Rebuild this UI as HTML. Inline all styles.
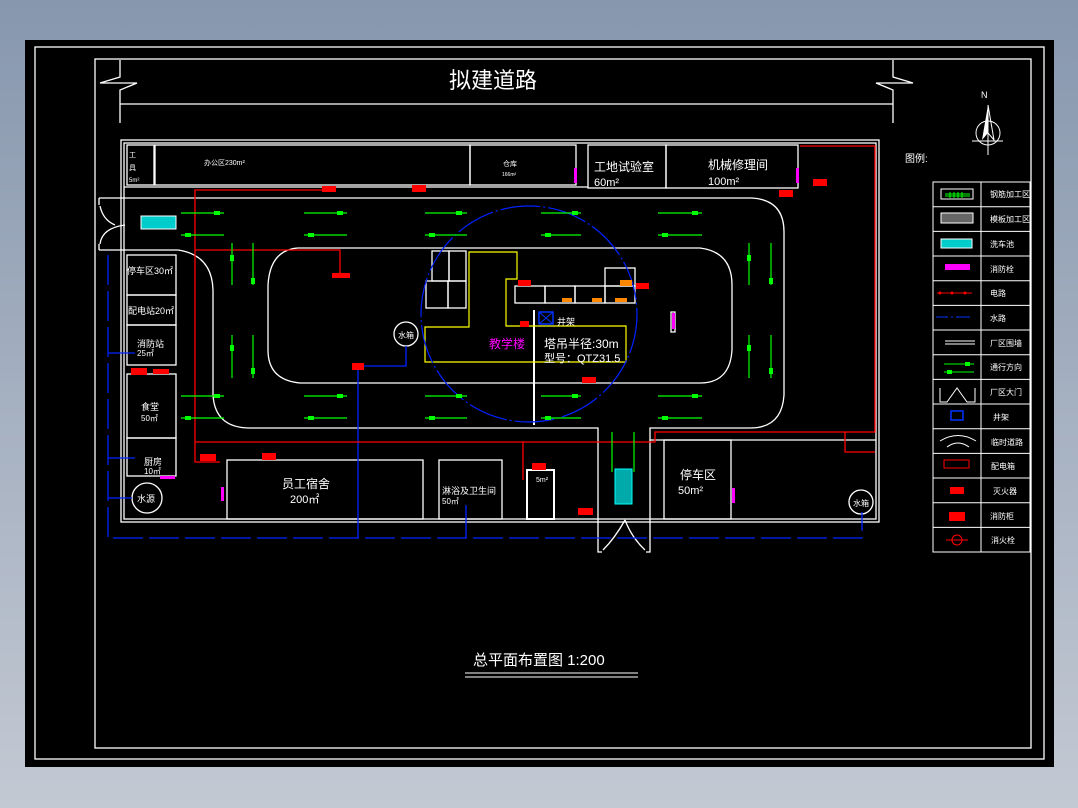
<!DOCTYPE html>
<html><head><meta charset="utf-8"><style>
html,body{margin:0;padding:0;width:1078px;height:808px;overflow:hidden;background:linear-gradient(#8797ae,#c3c9d3);}
svg{display:block}
text{font-family:"Liberation Sans","Noto Sans CJK SC",sans-serif;fill:#fff}
</style></head><body>
<svg width="1078" height="808" viewBox="0 0 1078 808" xmlns="http://www.w3.org/2000/svg">
<rect x="25" y="40" width="1029" height="727" fill="#000"/>
<g fill="none" stroke="#fff" stroke-width="1.3">
<rect x="35" y="47" width="1009" height="712"/>
<rect x="95" y="59" width="936" height="689"/>
<path d="M120 60V77L100 83H137L120 90V123"/>
<path d="M893 60V77L913 83H876L893 90V123"/>
<path d="M120 104H893"/>
<rect x="121" y="140" width="758" height="382"/>
<rect x="124" y="143" width="752" height="376"/>
<rect x="127" y="145" width="27" height="40"/>
<rect x="155" y="145" width="315" height="40"/>
<rect x="470" y="145" width="106" height="40"/>
<rect x="588" y="145" width="78" height="43"/>
<rect x="666" y="145" width="132" height="43"/>
<path d="M124 187H588"/>
<path d="M124 198H752Q784 200 784 232V395Q782 428 750 428H650V522"/>
<path d="M124 250H178Q212 255 213 290V395Q215 428 250 428H598V522"/>
<path d="M298 248H700Q732 252 732 285V350Q730 383 700 383H300Q268 380 268 350V285Q270 250 298 248Z"/>
<path d="M99 198H124M99 198V205M99 250H124M99 250V244"/>
<path d="M100 206Q103 220 115 225M100 244Q102 228 125 225"/>
<rect x="127" y="255" width="49" height="40"/>
<rect x="127" y="295" width="49" height="30"/>
<rect x="127" y="325" width="49" height="40"/>
<rect x="127" y="374" width="49" height="64"/>
<rect x="127" y="438" width="49" height="38"/>
<circle cx="147" cy="498" r="15"/>
<circle cx="406" cy="334" r="12"/>
<circle cx="861" cy="502" r="12"/>
<rect x="227" y="460" width="196" height="59"/>
<rect x="439" y="460" width="63" height="59"/>
<rect x="527" y="470" width="27" height="49" stroke-width="2"/>
<rect x="664" y="440" width="67" height="79"/>
<path d="M650 440H876"/>
<path d="M598 522V552H602M650 522V552H646"/>
<path d="M603 550Q615 538 625 520M645 550Q632 538 625 520"/>
<rect x="432" y="251" width="17" height="30"/>
<rect x="449" y="251" width="17" height="30"/>
<rect x="426" y="281" width="22" height="27"/>
<rect x="448" y="281" width="18" height="27"/>
<rect x="515" y="286" width="30" height="17"/>
<rect x="545" y="286" width="30" height="17"/>
<rect x="575" y="286" width="30" height="17"/>
<rect x="605" y="286" width="30" height="17"/>
<rect x="605" y="268" width="30" height="18"/>
<path d="M534 310V425" stroke-width="2"/>
<path d="M671 312h4v20h-4z"/>
</g>
<path d="M425 327H469V252H517V279H506V326H626V362H425Z" fill="none" stroke="#ff0" stroke-width="1.2"/>
<circle cx="529" cy="314" r="108" fill="none" stroke="#0022ff" stroke-width="1.2" stroke-dasharray="40 3 2 3"/>
<rect x="539" y="312" width="14" height="12" fill="none" stroke="#03f" stroke-width="1.5"/>
<path d="M539 312l14 12M553 312l-14 12" stroke="#03f"/>
<g stroke="#0022ff" stroke-width="1.3" fill="none">
<path d="M108 255V538H862V512" stroke-dasharray="30 6"/>
<path d="M108 353H135M108 458H135M108 498H132M406 346V366H358M358 366V538M466 505V538"/>
</g>
<g stroke="#f00" stroke-width="1.3" fill="none">
<path d="M330 190H195V462H220"/>
<path d="M195 250H340V275"/>
<path d="M195 442H655V432H875V146H800"/>
<path d="M523 442V480M845 432V452H875"/>
</g>
<g fill="#f00">
<rect x="412" y="185" width="14" height="7"/><rect x="322" y="186" width="14" height="6"/>
<rect x="332" y="273" width="18" height="5"/><rect x="131" y="368" width="16" height="7"/>
<rect x="153" y="369" width="16" height="5"/><rect x="200" y="454" width="16" height="7"/>
<rect x="262" y="453" width="14" height="7"/><rect x="532" y="463" width="14" height="7"/>
<rect x="578" y="508" width="15" height="7"/><rect x="582" y="377" width="14" height="6"/>
<rect x="779" y="190" width="14" height="7"/><rect x="813" y="179" width="14" height="7"/>
<rect x="518" y="280" width="13" height="6"/><rect x="636" y="283" width="13" height="6"/>
<rect x="520" y="321" width="9" height="6"/><rect x="352" y="363" width="12" height="7"/>
</g>
<g fill="#f0f">
<rect x="574" y="168" width="3" height="15"/><rect x="796" y="168" width="3" height="15"/>
<rect x="672" y="313" width="3" height="16"/><rect x="732" y="488" width="3" height="15"/>
<rect x="221" y="487" width="3" height="14"/><rect x="160" y="476" width="15" height="3"/>
<text x="489" y="348" font-size="12" style="fill:#f0f">教学楼</text>
</g>
<g fill="#f80"><rect x="620" y="280" width="12" height="6"/><rect x="592" y="298" width="10" height="4"/><rect x="615" y="298" width="12" height="4"/><rect x="562" y="298" width="10" height="4"/></g>
<rect x="141" y="216" width="35" height="13" fill="#0cc" stroke="#fff"/>
<rect x="615" y="469" width="17" height="35" fill="#0aa" stroke="#0ff"/>
<g stroke="#0f0" stroke-width="1.2" fill="#0f0">
<path d="M181 213H224M304 213H347M425 213H467M541 213H581M658 213H702"/>
<path d="M181 235H224M304 235H347M425 235H467M541 235H581M658 235H702"/>
<path d="M181 396H224M304 396H347M425 396H467M541 396H581M658 396H702"/>
<path d="M181 418H224M304 418H347M425 418H467M541 418H581M658 418H702"/>
<path d="M232 243V285M253 243V285M232 335V378M253 335V378M749 243V285M771 243V285M749 335V378M771 335V378M612 432V472M634 432V472"/>
</g>
<g fill="#0f0">
<rect x="214" y="211" width="6" height="4"/><rect x="337" y="211" width="6" height="4"/><rect x="456" y="211" width="6" height="4"/><rect x="572" y="211" width="6" height="4"/><rect x="692" y="211" width="6" height="4"/>
<rect x="185" y="233" width="6" height="4"/><rect x="308" y="233" width="6" height="4"/><rect x="429" y="233" width="6" height="4"/><rect x="545" y="233" width="6" height="4"/><rect x="662" y="233" width="6" height="4"/>
<rect x="337" y="394" width="6" height="4"/><rect x="456" y="394" width="6" height="4"/><rect x="572" y="394" width="6" height="4"/><rect x="692" y="394" width="6" height="4"/><rect x="214" y="394" width="6" height="4"/>
<rect x="308" y="416" width="6" height="4"/><rect x="429" y="416" width="6" height="4"/><rect x="545" y="416" width="6" height="4"/><rect x="662" y="416" width="6" height="4"/><rect x="185" y="416" width="6" height="4"/>
<rect x="230" y="255" width="4" height="6"/><rect x="251" y="278" width="4" height="6"/><rect x="230" y="345" width="4" height="6"/><rect x="251" y="368" width="4" height="6"/>
<rect x="747" y="255" width="4" height="6"/><rect x="769" y="278" width="4" height="6"/><rect x="747" y="345" width="4" height="6"/><rect x="769" y="368" width="4" height="6"/>
</g>
<text x="449" y="88" font-size="22">拟建道路</text>
<text x="204" y="165" font-size="7">办公区230m²</text>
<text x="503" y="166" font-size="7">仓库</text>
<text x="502" y="176" font-size="5">166m²</text>
<text x="129" y="157" font-size="7">工</text><text x="129" y="170" font-size="7">具</text><text x="129" y="182" font-size="6">5m²</text>
<text x="594" y="171" font-size="12">工地试验室</text>
<text x="594" y="186" font-size="11">60m²</text>
<text x="708" y="169" font-size="12">机械修理间</text>
<text x="708" y="185" font-size="11">100m²</text>
<text x="127" y="274" font-size="9">停车区30㎡</text>
<text x="128" y="314" font-size="9">配电站20㎡</text>
<text x="137" y="347" font-size="9">消防站</text><text x="137" y="356" font-size="8">25㎡</text>
<text x="141" y="410" font-size="9">食堂</text><text x="141" y="421" font-size="8">50㎡</text>
<text x="144" y="465" font-size="9">厨房</text><text x="144" y="474" font-size="8">10㎡</text>
<text x="137" y="502" font-size="9">水源</text>
<text x="398" y="338" font-size="8">水箱</text>
<text x="853" y="506" font-size="8">水箱</text>
<text x="282" y="488" font-size="12">员工宿舍</text>
<text x="290" y="503" font-size="11">200㎡</text>
<text x="442" y="494" font-size="9">淋浴及卫生间</text>
<text x="442" y="504" font-size="8">50㎡</text>
<text x="536" y="482" font-size="7">5m²</text>
<text x="680" y="479" font-size="12">停车区</text>
<text x="678" y="494" font-size="11">50m²</text>
<text x="544" y="348" font-size="12">塔吊半径:30m</text>
<text x="544" y="362" font-size="11">型号：QTZ31.5</text>
<text x="557" y="325" font-size="9">井架</text>
<text x="905" y="162" font-size="10">图例:</text>
<text x="473" y="665" font-size="15">总平面布置图 1:200</text>
<path d="M465 673H638M465 677H638" stroke="#fff"/>
<text x="981" y="98" font-size="9">N</text>
<circle cx="988" cy="133" r="12" fill="none" stroke="#fff"/>
<path d="M988 105L982 140L988 133Z" fill="#fff"/><path d="M988 105L994 140L988 133Z" fill="none" stroke="#fff"/>
<path d="M972 141H1003M988 125V155" stroke="#fff"/>
<g stroke="#fff" fill="none">
<rect x="933" y="182" width="97" height="370"/>
<path d="M981 182V552"/>
<path d="M933 206.7H1030M933 231.4H1030M933 256H1030M933 280.7H1030M933 305.4H1030M933 330H1030M933 354.7H1030M933 379.4H1030M933 404H1030M933 428.7H1030M933 453.4H1030M933 478H1030M933 502.7H1030M933 527.4H1030"/>
<rect x="941" y="189" width="32" height="10"/>
<rect x="941" y="213" width="32" height="10" fill="#666"/>
<rect x="941" y="239" width="31" height="9" fill="#0cc"/>
<path d="M945 341H975M945 344H975M940 388V402H947L957 388L967 402H975V388"/>
<path d="M940 441Q958 430 976 441M947 447Q958 439 969 447"/>
</g>
<path d="M950 192V198M954 192V198M958 192V198M962 192V198M945 194H970M945 196H970" stroke="#0f0"/>
<rect x="945" y="264" width="25" height="6" fill="#f0f"/>
<path d="M937 293H972" stroke="#f00"/><circle cx="940" cy="293" r="1.5" fill="#f00"/><circle cx="952" cy="293" r="1.5" fill="#f00"/><circle cx="965" cy="293" r="1.5" fill="#f00"/>
<path d="M936 317H948M951 317H953M956 317H970" stroke="#03f"/>
<path d="M944 364H974M944 372H974" stroke="#0f0"/><rect x="965" y="362" width="5" height="4" fill="#0f0"/><rect x="947" y="370" width="5" height="4" fill="#0f0"/>
<rect x="951" y="411" width="12" height="9" fill="none" stroke="#03f" stroke-width="1.5"/>
<rect x="944" y="460" width="25" height="8" fill="none" stroke="#f00"/>
<rect x="950" y="487" width="14" height="7" fill="#f00"/>
<rect x="949" y="512" width="16" height="9" fill="#f00"/>
<circle cx="957" cy="540" r="5" fill="none" stroke="#f00"/><path d="M946 540H968" stroke="#f00"/>
<g font-size="8">
<text x="990" y="197">钢筋加工区</text><text x="990" y="222">模板加工区</text><text x="990" y="247">洗车池</text>
<text x="990" y="272">消防栓</text><text x="990" y="296">电路</text><text x="990" y="321">水路</text>
<text x="990" y="346">厂区围墙</text><text x="990" y="370">通行方向</text><text x="990" y="395">厂区大门</text>
<text x="993" y="420">井架</text><text x="991" y="445">临时道路</text><text x="991" y="469">配电箱</text>
<text x="993" y="494">灭火器</text><text x="990" y="519">消防柜</text><text x="991" y="543">消火栓</text>
</g>
</svg>
</body></html>
